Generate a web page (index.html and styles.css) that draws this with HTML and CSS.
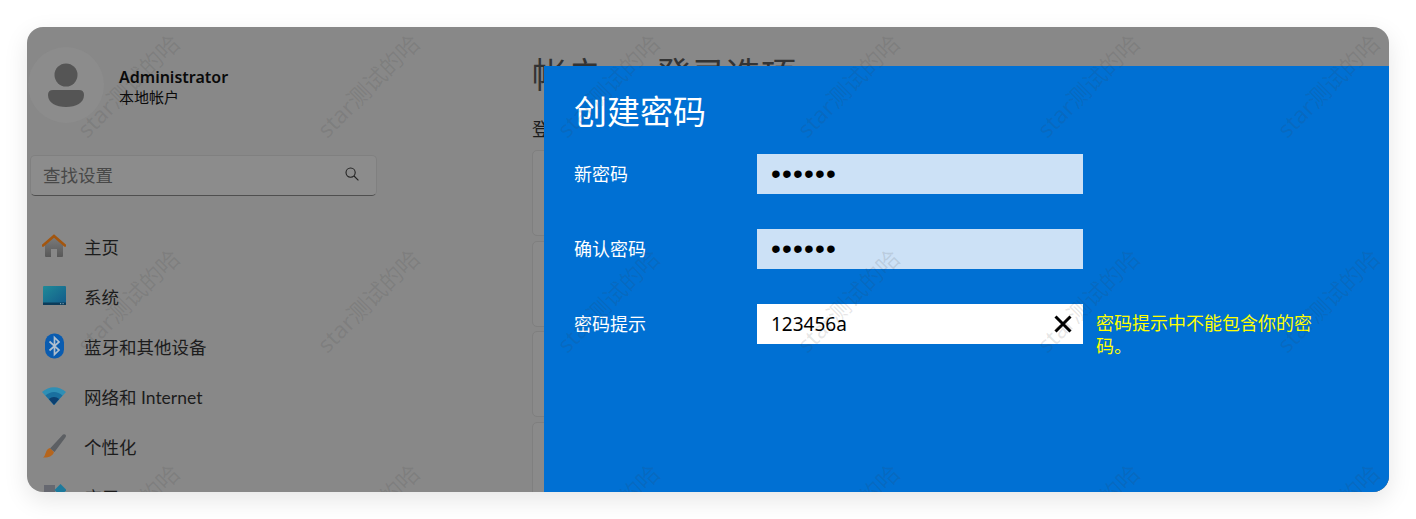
FILE: index.html
```html
<!DOCTYPE html>
<html lang="zh-CN">
<head>
    <meta charset="UTF-8">
    <title>创建密码</title>
    <link rel="stylesheet" href="styles.css">
</head>
<body>
    <div class="window">
        <aside class="sidebar">
            <div class="account">
                <div class="avatar">
                    <svg width="36" height="60" viewBox="0 0 36 60">
                        <circle cx="18" cy="12" r="11.5" fill="#555"/>
                        <path d="M5 27H31Q36 27 36 32C36 40 28 44 18 44S0 40 0 32Q0 27 5 27Z" fill="#555"/>
                    </svg>
                </div>
                <div class="account-text">
                    <div class="account-name">Administrator</div>
                    <div class="account-type">本地帐户</div>
                </div>
            </div>

            <div class="search">
                <span>查找设置</span>
                <svg width="14" height="14" viewBox="0 0 14 14" fill="none" stroke="#222" stroke-width="1.1">
                    <circle cx="5.6" cy="5.6" r="4.6"/>
                    <path d="M9 9L13.4 13.4"/>
                </svg>
            </div>

            <nav class="nav">
                <div class="nav-item">
                    <svg class="nav-icon" width="24" height="24" viewBox="0 0 24 24">
                        <defs>
                            <linearGradient id="homeBody" x1="0" y1="0" x2="0" y2="1">
                                <stop offset="0" stop-color="#7c7c7c"/>
                                <stop offset="1" stop-color="#585858"/>
                            </linearGradient>
                        </defs>
                        <path d="M3 10L12 2.500L21 10V22Q21 23 20 23H15V15H9V23H4Q3 23 3 22Z" fill="url(#homeBody)"/>
                        <path d="M1 11.500L12 2L23 11.500" fill="none" stroke="#a3560f" stroke-width="2.600" stroke-linecap="round"/>
                    </svg>
                    <span>主页</span>
                </div>
                <div class="nav-item">
                    <svg class="nav-icon" width="24" height="24" viewBox="0 0 24 24">
                        <defs>
                            <linearGradient id="sysScreen" x1="0" y1="0" x2="1" y2="1">
                                <stop offset="0" stop-color="#1f8a98"/>
                                <stop offset="1" stop-color="#12598a"/>
                            </linearGradient>
                        </defs>
                        <rect x="1" y="2" width="23" height="19" rx="1" fill="url(#sysScreen)"/>
                        <rect x="1" y="18.500" width="23" height="2.500" fill="#0c3c5a"/>
                        <path d="M18 19.700h1.200M20.500 19.700h1.200" stroke="#8fb4c4" stroke-width="1"/>
                    </svg>
                    <span>系统</span>
                </div>
                <div class="nav-item">
                    <svg class="nav-icon" width="24" height="26" viewBox="0 0 24 26">
                        <rect x="3" y="0.500" width="19" height="25" rx="9" fill="#0a5cb0"/>
                        <path d="M7.500 8.500L17 17L12.500 21.500V4.500L17 9L7.500 17.500" fill="none" stroke="#b0bfce" stroke-width="1.700"/>
                    </svg>
                    <span>蓝牙和其他设备</span>
                </div>
                <div class="nav-item">
                    <svg class="nav-icon" width="24" height="24" viewBox="0 0 24 24">
                        <path d="M0 8C7 1.500 17 1.500 24 8L12 21Z" fill="#2f8fb5"/>
                        <path d="M3.500 11.500C8.500 6.800 15.500 6.800 20.500 11.500L12 21Z" fill="#1a6f9f"/>
                        <path d="M6.800 15C10 12.300 14 12.300 17.200 15L12 21Z" fill="#0c3f70"/>
                    </svg>
                    <span>网络和 Internet</span>
                </div>
                <div class="nav-item">
                    <svg class="nav-icon" width="24" height="26" viewBox="0 0 24 26">
                        <path d="M21 1.500Q23 0.500 24 2.500Q24 4 23 5L12.500 19L8 15.500Z" fill="#5c5f63"/>
                        <path d="M7.500 15L12 19C11 23 6 25 1 24.500C4 23 3 17 7.500 15Z" fill="#b5651d"/>
                    </svg>
                    <span>个性化</span>
                </div>
                <div class="nav-item">
                    <svg class="nav-icon" width="24" height="24" viewBox="0 0 24 24">
                        <rect x="2" y="1" width="11" height="11" fill="#666870"/>
                        <path d="M18.500 0L24.500 6L18.500 12L12.500 6Z" fill="#1d7a9c"/>
                        <rect x="2" y="13" width="11" height="10.500" fill="#666870"/>
                        <rect x="14" y="13" width="9.500" height="10.500" fill="#666870"/>
                    </svg>
                    <span>应用</span>
                </div>
            </nav>
        </aside>

        <main class="content">
            <h1 class="page-title">帐户<span class="crumb">›</span>登录选项</h1>
            <div class="section-label">登录方式</div>
            <div class="card"></div>
            <div class="card"></div>
            <div class="card"></div>
            <div class="card"></div>
        </main>

        <section class="dialog">
            <h2 class="dialog-title">创建密码</h2>
            <div class="form-row">
                <label class="form-label">新密码</label>
                <div class="field field-dim"><span class="dots">••••••</span></div>
            </div>
            <div class="form-row">
                <label class="form-label">确认密码</label>
                <div class="field field-dim"><span class="dots">••••••</span></div>
            </div>
            <div class="form-row">
                <label class="form-label">密码提示</label>
                <div class="field">
                    <span>123456a</span>
                    <svg width="18" height="18" viewBox="0 0 18 18" stroke="#000" stroke-width="3">
                        <path d="M1.500 1.500L16.500 16.500M16.500 1.500L1.500 16.500"/>
                    </svg>
                </div>
                <p class="hint">密码提示中不能包含你的密码。</p>
            </div>
        </section>

        <div class="watermarks">
            <span>star测试的哈</span><span>star测试的哈</span><span>star测试的哈</span><span>star测试的哈</span><span>star测试的哈</span><span>star测试的哈</span>
            <span>star测试的哈</span><span>star测试的哈</span><span>star测试的哈</span><span>star测试的哈</span><span>star测试的哈</span><span>star测试的哈</span>
            <span>star测试的哈</span><span>star测试的哈</span><span>star测试的哈</span><span>star测试的哈</span><span>star测试的哈</span><span>star测试的哈</span>
        </div>
    </div>
</body>
</html>
```

FILE: styles.css
```css
body {
    margin: 0;
    padding: 27px;
    height: 519px;
    box-sizing: border-box;
    overflow: hidden;
    background: #fff;
    font-family: "Noto Sans", "Noto Sans CJK SC", sans-serif;
}

.window {
    position: relative;
    display: flex;
    height: 465px;
    overflow: hidden;
    border-radius: 16px;
    background: #888;
    box-shadow: 0 8px 24px rgba(0, 0, 0, 0.1);
}

.sidebar {
    width: 505px;
    flex-shrink: 0;
    padding: 20px 0 0 3px;
    box-sizing: border-box;
}

.account {
    display: flex;
    align-items: center;
    gap: 15px;
    margin-left: -2px;
}

.avatar {
    width: 76px;
    height: 76px;
    flex-shrink: 0;
    display: flex;
    justify-content: center;
    align-items: flex-start;
    padding-top: 16px;
    box-sizing: border-box;
    border-radius: 50%;
    background: #8c8c8c;
}

.account-text {
    margin-top: 2px;
}

.account-name {
    font-size: 16px;
    font-weight: 600;
    line-height: 22px;
    color: #0a0a0a;
}

.account-type {
    font-size: 15px;
    line-height: 19px;
    color: #0a0a0a;
}

.search {
    display: flex;
    justify-content: space-between;
    align-items: center;
    width: 347px;
    height: 41px;
    margin-top: 32px;
    padding: 0 17px 3px 12px;
    box-sizing: border-box;
    border: 1px solid #808080;
    border-bottom-color: #4f4f4f;
    border-radius: 5px;
    background: #8c8c8c;
    font-size: 17.500px;
    color: #484848;
}

.nav {
    margin-top: 25px;
}

.nav-item {
    display: flex;
    align-items: center;
    gap: 18px;
    height: 50px;
    padding-left: 12px;
    font-family: "Lato", "Noto Sans CJK SC", sans-serif;
    font-size: 17.500px;
    color: #1c1c1c;
}

.nav-icon {
    flex-shrink: 0;
}

.content {
    flex: 1;
    padding-top: 20px;
}

.page-title {
    display: flex;
    align-items: center;
    margin: 0;
    height: 50px;
    font-size: 35px;
    font-weight: 400;
    color: #333;
}

.crumb {
    width: 54px;
    text-align: center;
    font-size: 22px;
}

.section-label {
    margin-top: 20px;
    font-size: 18px;
    line-height: 25px;
    color: #1c1c1c;
}

.card {
    height: 84px;
    margin-bottom: 4.500px;
    border: 1px solid #7f7f7f;
    border-radius: 5px;
    background: #8a8a8a;
}

.section-label + .card {
    margin-top: 8px;
}

.dialog {
    position: absolute;
    top: 39px;
    left: 517px;
    right: 0;
    bottom: 0;
    padding: 24px 30px 0;
    background: #0070d3;
    color: #fff;
}

.dialog-title {
    margin: 0 0 20px;
    font-size: 33px;
    font-weight: 400;
    line-height: 44px;
}

.form-row {
    display: flex;
    margin-bottom: 35px;
}

.form-label {
    width: 183px;
    flex-shrink: 0;
    font-size: 18px;
    line-height: 40px;
}

.field {
    display: flex;
    justify-content: space-between;
    align-items: center;
    width: 326px;
    height: 40px;
    flex-shrink: 0;
    padding: 0 11px 0 14px;
    box-sizing: border-box;
    background: #fff;
    font-size: 19px;
    color: #000;
}

.field-dim {
    background: #cce1f6;
}

.dots {
    font-family: "Liberation Sans", sans-serif;
    font-size: 28px;
    letter-spacing: 1.200px;
    line-height: 40px;
}

.hint {
    width: 224px;
    margin: 8px 0 0 13px;
    font-size: 18px;
    line-height: 23px;
    color: #ffff00;
}

.watermarks {
    position: absolute;
    top: -50px;
    left: -20px;
    display: grid;
    grid-template-columns: repeat(6, 240px);
    grid-auto-rows: 215px;
    pointer-events: none;
}

.watermarks span {
    display: flex;
    justify-content: center;
    align-items: center;
    transform: rotate(-45deg);
    font-size: 23px;
    white-space: nowrap;
    color: rgba(60, 60, 60, 0.13);
}
```
